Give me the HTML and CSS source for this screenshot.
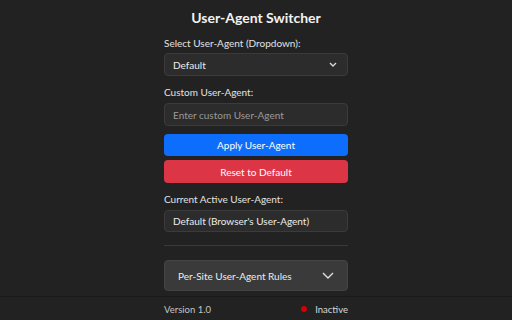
FILE: index.html
```html
<!DOCTYPE html>
<html>
<head>
<meta charset="utf-8">
<link rel="stylesheet" href="styles.css">
</head>
<body>
<main class="panel">
  <h1 class="title">User-Agent Switcher</h1>
  <label class="label label-first">Select User-Agent (Dropdown):</label>
  <div class="field select">
    <span>Default</span>
    <svg class="caret" width="8" height="5" viewBox="0 0 8 5"><path d="M1 1l3 3 3-3" fill="none" stroke="#d8d8d8" stroke-width="1.4"/></svg>
  </div>
  <label class="label">Custom User-Agent:</label>
  <div class="field input">Enter custom User-Agent</div>
  <div class="buttons">
    <button class="btn btn-blue">Apply User-Agent</button>
    <button class="btn btn-red">Reset to Default</button>
  </div>
  <label class="label">Current Active User-Agent:</label>
  <div class="field display">Default (Browser's User-Agent)</div>
  <hr class="divider">
  <div class="accordion">
    <span>Per-Site User-Agent Rules</span>
    <svg class="chev" width="12" height="7" viewBox="0 0 12 7"><path d="M1 1l5 5 5-5" fill="none" stroke="#e0e0e0" stroke-width="1.4"/></svg>
  </div>
</main>
<footer class="footer">
  <div class="footer-inner">
    <span>Version 1.0</span>
    <span class="status"><i class="dot"></i>Inactive</span>
  </div>
</footer>
</body>
</html>
```
FILE: styles.css
```css
html, body {
  margin: 0;
  padding: 0;
  background: #222222;
  color: #e4e4e4;
  font-family: "Lato", "Open Sans", sans-serif;
  font-size: 10px;
}
.panel {
  width: 184px;
  margin: 0 auto;
  display: flex;
  flex-direction: column;
}
.title {
  margin: 8px 0 0;
  height: 20px;
  line-height: 20px;
  font-size: 14px;
  font-weight: 700;
  text-align: center;
  color: #f2f2f2;
}
.label {
  display: block;
  margin-top: 9px;
  height: 14px;
  line-height: 14px;
  color: #e2e2e2;
}
.label-first {
  margin-top: 8px;
}
.field {
  box-sizing: border-box;
  height: 23px;
  margin-top: 3px;
  padding: 0 8px;
  background: #2c2c2c;
  border: 1px solid #3b3b3b;
  border-radius: 4px;
  display: flex;
  align-items: center;
  justify-content: space-between;
  color: #ededed;
}
.input {
  margin-top: 4px;
  color: #9a9a9a;
}
.display {
  height: 22px;
  margin-top: 4px;
}
.buttons {
  display: flex;
  flex-direction: column;
  gap: 4px;
  margin-top: 8px;
}
.btn {
  height: 22px;
  border: 0;
  border-radius: 4px;
  font: inherit;
  color: #ffffff;
  padding: 0;
}
.btn-blue { background: #0d6efd; }
.btn-red { background: #dc3545; height: 23px; }
.caret { margin-right: 2px; }
.divider {
  margin: 13px 0 0;
  border: 0;
  border-top: 1px solid #3a3a3a;
  height: 0;
}
.accordion {
  box-sizing: border-box;
  margin-top: 14px;
  height: 31px;
  padding: 0 13px;
  background: #3a3a3a;
  border: 1px solid #444;
  border-radius: 4px;
  display: flex;
  align-items: center;
  justify-content: space-between;
  color: #ececec;
}
.footer {
  margin-top: 5px;
  border-top: 1px solid #1a1a1a;
}
.footer-inner {
  width: 184px;
  margin: 0 auto;
  height: 24px;
  display: flex;
  align-items: center;
  justify-content: space-between;
  font-size: 9.5px;
  color: #c4c4c4;
}
.status {
  display: flex;
  align-items: center;
  gap: 8px;
  color: #d8d8d8;
}
.dot {
  width: 6px;
  height: 6px;
  border-radius: 50%;
  background: #d10000;
}
```
